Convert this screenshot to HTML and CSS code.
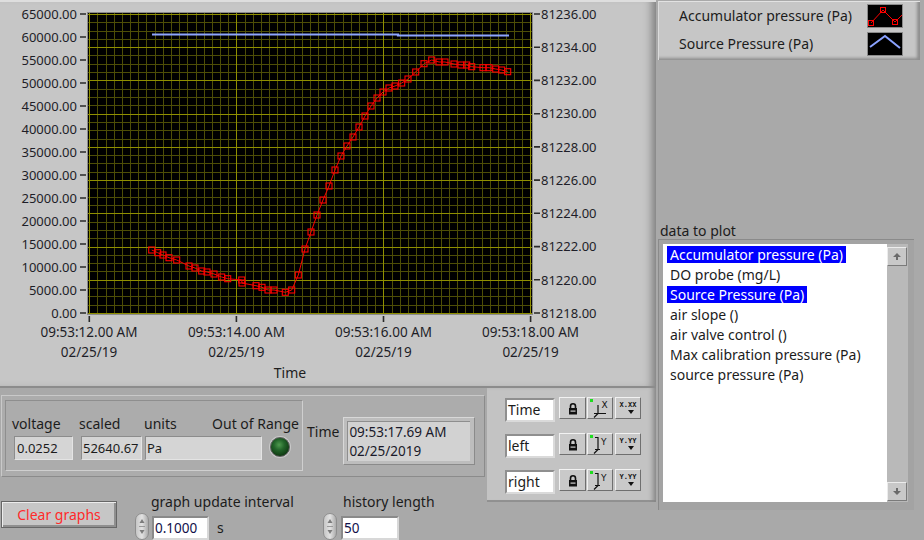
FILE: index.html
```html
<!DOCTYPE html>
<html>
<head>
<meta charset="utf-8">
<link rel="stylesheet" href="styles.css">
</head>
<body>
<div class="panel">
  <div class="left-col">
    <div class="graph-frame">
      <svg class="graph" width="656" height="386" viewBox="0 0 656 386">
        <defs>
          <marker id="sq" markerWidth="9" markerHeight="9" refX="4.5" refY="4.5" markerUnits="userSpaceOnUse">
            <rect x="1.5" y="1.5" width="6" height="6" class="sq-mark"/>
          </marker>
        </defs>
        <rect x="88" y="13" width="444" height="301" class="plot-bg"/>
        <path class="grid-minor" d="M97.5 13V314M106.5 13V314M114.5 13V314M122.5 13V314M130.5 13V314M138.5 13V314M146.5 13V314M155.5 13V314M163.5 13V314M171.5 13V314M179.5 13V314M187.5 13V314M196.5 13V314M204.5 13V314M212.5 13V314M220.5 13V314M228.5 13V314M245.5 13V314M253.5 13V314M261.5 13V314M269.5 13V314M277.5 13V314M285.5 13V314M294.5 13V314M302.5 13V314M310.5 13V314M318.5 13V314M326.5 13V314M334.5 13V314M343.5 13V314M351.5 13V314M359.5 13V314M367.5 13V314M375.5 13V314M392.5 13V314M400.5 13V314M408.5 13V314M416.5 13V314M424.5 13V314M433.5 13V314M441.5 13V314M449.5 13V314M457.5 13V314M465.5 13V314M473.5 13V314M482.5 13V314M490.5 13V314M498.5 13V314M506.5 13V314M514.5 13V314M522.5 13V314M88 22.5H532M88 31.5H532M88 39.5H532M88 55.5H532M88 64.5H532M88 72.5H532M88 89.5H532M88 97.5H532M88 105.5H532M88 122.5H532M88 130.5H532M88 139.5H532M88 155.5H532M88 163.5H532M88 172.5H532M88 188.5H532M88 197.5H532M88 205.5H532M88 222.5H532M88 230.5H532M88 238.5H532M88 255.5H532M88 263.5H532M88 271.5H532M88 288.5H532M88 296.5H532M88 305.5H532"/>
        <path class="grid-major" d="M89.5 13V314M236.5 13V314M383.5 13V314M530.5 13V314M88 14.5H532M88 47.5H532M88 80.5H532M88 114.5H532M88 147.5H532M88 180.5H532M88 213.5H532M88 247.5H532M88 280.5H532M88 313.5H532"/>
        <rect x="87.5" y="12.5" width="445" height="302" class="plot-border"/>
        <polyline class="src-line" points="152,34.5 398,34.5 398,35.5 509,35.5"/>
        <polyline class="acc-line" points="151.7,250 157.7,252.7 163,255 169,257.7 176.7,260 189,266 195,268 201.7,271 207,272 214,274 221.7,277 227.7,278.7 241.7,280 242,283 256,285.7 262,287.3 268,290 274,290 285.3,292.3 291.7,290 298.3,275 305,249 311,232 317,215 323,200 329,186 335,170 341,156 347,146 353,137 359,127 365,116 371,106 377,98 383,92 389,88 395,86 401.7,83 408,79 415.7,72 424,63.7 431.7,60 439,62 445,62 454,64 461,65 466.7,65 471.7,66.7 483,67.7 489,67.7 495.7,69 501.7,70 507.7,71.7"/>
        <path class="tick" d="M80 14H86M80 37H86M80 60H86M80 83H86M80 106H86M80 129H86M80 152H86M80 175H86M80 198H86M80 221H86M80 244H86M80 267H86M80 290H86M80 313H86M534 14H540M534 47.2H540M534 80.4H540M534 113.7H540M534 146.9H540M534 180.1H540M534 213.3H540M534 246.6H540M534 279.8H540M534 313H540M89.3 316V322M236.4 316V322M383.5 316V322M530.6 316V322"/>
        <g class="ylab">
          <text x="77" y="18.7">65000.00</text>
          <text x="77" y="41.7">60000.00</text>
          <text x="77" y="64.7">55000.00</text>
          <text x="77" y="87.7">50000.00</text>
          <text x="77" y="110.7">45000.00</text>
          <text x="77" y="133.7">40000.00</text>
          <text x="77" y="156.7">35000.00</text>
          <text x="77" y="179.7">30000.00</text>
          <text x="77" y="202.7">25000.00</text>
          <text x="77" y="225.7">20000.00</text>
          <text x="77" y="248.7">15000.00</text>
          <text x="77" y="271.7">10000.00</text>
          <text x="77" y="294.7">5000.00</text>
          <text x="77" y="317.7">0.00</text>
        </g>
        <g class="rlab">
          <text x="541" y="18.7">81236.00</text>
          <text x="541" y="51.9">81234.00</text>
          <text x="541" y="85.1">81232.00</text>
          <text x="541" y="118.4">81230.00</text>
          <text x="541" y="151.6">81228.00</text>
          <text x="541" y="184.8">81226.00</text>
          <text x="541" y="218">81224.00</text>
          <text x="541" y="251.3">81222.00</text>
          <text x="541" y="284.5">81220.00</text>
          <text x="541" y="317.7">81218.00</text>
        </g>
        <g class="xlab">
          <text x="89" y="337.3">09:53:12.00 AM</text>
          <text x="89" y="356.8">02/25/19</text>
          <text x="236.4" y="337.3">09:53:14.00 AM</text>
          <text x="236.4" y="356.8">02/25/19</text>
          <text x="383.5" y="337.3">09:53:16.00 AM</text>
          <text x="383.5" y="356.8">02/25/19</text>
          <text x="530.6" y="337.3">09:53:18.00 AM</text>
          <text x="530.6" y="356.8">02/25/19</text>
        </g>
        <text class="xtitle" x="290" y="378">Time</text>
      </svg>
    </div>
    <div class="bottom">
      <div class="bottom-left">
        <div class="cluster">
          <div class="group">
            <div class="lbl lbl-voltage">voltage</div>
            <div class="lbl lbl-scaled">scaled</div>
            <div class="lbl lbl-units">units</div>
            <div class="lbl lbl-range">Out of Range</div>
            <div class="field field-voltage">0.0252</div>
            <div class="field field-scaled">52640.67</div>
            <div class="field field-units">Pa</div>
            <div class="led"></div>
          </div>
          <div class="time-block">
            <div class="time-lbl">Time</div>
            <div class="time-display">
              <div class="time-inner">09:53:17.69 AM<br>02/25/2019</div>
            </div>
          </div>
        </div>
        <div class="controls">
          <button class="clear-btn">Clear graphs</button>
          <div class="numctl numctl-interval">
            <div class="numlbl">graph update interval</div>
            <div class="numrow">
              <svg class="spinner" width="14" height="27" viewBox="0 0 14 27">
                <defs><linearGradient id="spg" x1="0" x2="1" y1="0" y2="0"><stop offset="0" stop-color="#c4c4c4"/><stop offset="0.5" stop-color="#e2e2e2"/><stop offset="1" stop-color="#a8a8a8"/></linearGradient></defs>
                <rect x="0.5" y="0.5" width="13" height="26" rx="6.5" fill="url(#spg)" stroke="#8e8e8e"/>
                <path d="M4 13.5H10" stroke="#9a9a9a"/>
                <path d="M7 6L9.5 10H4.5Z M7 21L9.5 17H4.5Z" fill="#7c7c7c"/>
              </svg>
              <div class="numfield">0.1000</div>
              <span class="unit">s</span>
            </div>
          </div>
          <div class="numctl numctl-history">
            <div class="numlbl">history length</div>
            <div class="numrow">
              <svg class="spinner" width="14" height="27" viewBox="0 0 14 27">
                <rect x="0.5" y="0.5" width="13" height="26" rx="6.5" fill="url(#spg)" stroke="#8e8e8e"/>
                <path d="M4 13.5H10" stroke="#9a9a9a"/>
                <path d="M7 6L9.5 10H4.5Z M7 21L9.5 17H4.5Z" fill="#7c7c7c"/>
              </svg>
              <div class="numfield numfield-history">50</div>
            </div>
          </div>
        </div>
      </div>
      <div class="palette">
        <div class="prow">
          <div class="axis-name">Time</div>
          <div class="pbtn pbtn-lock"><svg width="10" height="13" viewBox="0 0 10 13"><path d="M2.5 6.5V4.2a2.5 2.5 0 0 1 5 0v2.3" fill="none" stroke="#111" stroke-width="1.6"/><rect x="1" y="6" width="8" height="6.5" fill="#111"/><rect x="2.5" y="8.5" width="5" height="1.2" fill="#cfcfcf"/></svg></div>
          <div class="pbtn pbtn-scale"><svg width="22" height="19" viewBox="0 0 22 19"><rect x="1" y="0" width="3" height="3" fill="#1fdc1f"/><path d="M9 6V14.5M5 14.5H17M9 14.5L5 18.5" stroke="#111" stroke-width="1.2" fill="none"/><text x="12.5" y="9" class="ico-letter">X</text></svg></div>
          <div class="pbtn pbtn-fmt"><svg width="22" height="18" viewBox="0 0 22 18"><text x="11" y="8" class="ico-fmt">X.XX</text><path d="M11 11H17L14 15Z" fill="#111"/></svg></div>
        </div>
        <div class="prow">
          <div class="axis-name">left</div>
          <div class="pbtn pbtn-lock"><svg width="10" height="13" viewBox="0 0 10 13"><path d="M2.5 6.5V4.2a2.5 2.5 0 0 1 5 0v2.3" fill="none" stroke="#111" stroke-width="1.6"/><rect x="1" y="6" width="8" height="6.5" fill="#111"/><rect x="2.5" y="8.5" width="5" height="1.2" fill="#cfcfcf"/></svg></div>
          <div class="pbtn pbtn-scale"><svg width="22" height="19" viewBox="0 0 22 19"><rect x="1" y="0" width="3" height="3" fill="#1fdc1f"/><path d="M9 2V14.5M6 2.5H9M6 14.5H11M9 14.5L5 18.5" stroke="#111" stroke-width="1.2" fill="none"/><text x="12" y="10" class="ico-letter">Y</text></svg></div>
          <div class="pbtn pbtn-fmt"><svg width="22" height="18" viewBox="0 0 22 18"><text x="11" y="8" class="ico-fmt">Y.YY</text><path d="M11 11H17L14 15Z" fill="#111"/></svg></div>
        </div>
        <div class="prow">
          <div class="axis-name">right</div>
          <div class="pbtn pbtn-lock"><svg width="10" height="13" viewBox="0 0 10 13"><path d="M2.5 6.5V4.2a2.5 2.5 0 0 1 5 0v2.3" fill="none" stroke="#111" stroke-width="1.6"/><rect x="1" y="6" width="8" height="6.5" fill="#111"/><rect x="2.5" y="8.5" width="5" height="1.2" fill="#cfcfcf"/></svg></div>
          <div class="pbtn pbtn-scale"><svg width="22" height="19" viewBox="0 0 22 19"><rect x="1" y="0" width="3" height="3" fill="#1fdc1f"/><path d="M9 2V14.5M6 2.5H9M6 14.5H11M9 14.5L5 18.5" stroke="#111" stroke-width="1.2" fill="none"/><text x="12" y="10" class="ico-letter">Y</text></svg></div>
          <div class="pbtn pbtn-fmt"><svg width="22" height="18" viewBox="0 0 22 18"><text x="11" y="8" class="ico-fmt">Y.YY</text><path d="M11 11H17L14 15Z" fill="#111"/></svg></div>
        </div>
      </div>
    </div>
  </div>
  <div class="right-col">
    <div class="legend">
      <div class="leg-row">
        <span>Accumulator pressure (Pa)</span>
        <svg class="leg-icon" width="34" height="22" viewBox="0 0 34 22">
          <rect width="34" height="22" fill="#000"/>
          <polyline points="3,18 15,5 27,17 34,10" fill="none" stroke="#ff0000" stroke-width="1"/>
          <rect x="0.5" y="15.5" width="5" height="5" fill="none" stroke="#ff0000"/>
          <rect x="12.5" y="2.5" width="5" height="5" fill="none" stroke="#ff0000"/>
          <rect x="24.5" y="14.5" width="5" height="5" fill="none" stroke="#ff0000"/>
        </svg>
      </div>
      <div class="leg-row">
        <span>Source Pressure (Pa)</span>
        <svg class="leg-icon" width="34" height="22" viewBox="0 0 34 22">
          <rect width="34" height="22" fill="#000"/>
          <polyline points="2,14 17,3 32,15" fill="none" stroke="#8aa2ff" stroke-width="2"/>
        </svg>
      </div>
    </div>
    <div class="data-lbl">data to plot</div>
    <div class="listframe">
      <ul class="list">
        <li class="sel"><span>Accumulator pressure (Pa)</span></li>
        <li><span>DO probe (mg/L)</span></li>
        <li class="sel"><span>Source Pressure (Pa)</span></li>
        <li><span>air slope ()</span></li>
        <li><span>air valve control ()</span></li>
        <li><span>Max calibration pressure (Pa)</span></li>
        <li><span>source pressure (Pa)</span></li>
      </ul>
      <div class="scrollbar">
        <div class="sbtn"><svg width="8" height="7" viewBox="0 0 8 7"><path d="M4 0L8 4H5V7H3V4H0Z" fill="#6a6a6a"/></svg></div>
        <div class="sbtn"><svg width="8" height="7" viewBox="0 0 8 7"><path d="M4 7L8 3H5V0H3V3H0Z" fill="#6a6a6a"/></svg></div>
      </div>
    </div>
  </div>
</div>
</body>
</html>
```

FILE: styles.css
```css
* { box-sizing: border-box; }
html, body { margin: 0; padding: 0; }
body {
  width: 924px;
  height: 540px;
  overflow: hidden;
  background: #a9a9a9;
  font-family: "Noto Sans", "DejaVu Sans", sans-serif;
  font-size: 14px;
  line-height: 16px;
  color: #1c1c1c;
}
.panel { display: flex; width: 924px; height: 540px; }
.left-col { width: 656px; flex: none; display: flex; flex-direction: column; }

/* graph */
.graph-frame {
  height: 388px;
  background: #c6c6c6;
  border-bottom: 2px solid #8c8c8c;
  box-shadow: inset 0 2px 0 #dedede, inset -9px 0 8px -5px #7e7e7e;
}
.graph { display: block; }
.plot-bg { fill: #000; }
.plot-border { fill: none; stroke: #8a8a8a; }
.grid-minor { fill: none; stroke: #4e4e06; stroke-width: 1; shape-rendering: crispEdges; }
.grid-major { fill: none; stroke: #8f8f00; stroke-width: 1; shape-rendering: crispEdges; }
.src-line { fill: none; stroke: #8ea6ff; stroke-width: 2.2; }
.acc-line { fill: none; stroke: #ff0000; stroke-width: 1; marker: url(#sq); }
.sq-mark { fill: none; stroke: #ff0000; stroke-width: 1.1; }
.tick { fill: none; stroke: #2a2a2a; stroke-width: 1.6; }
.ylab text, .rlab text { font-family: "Noto Sans", sans-serif; font-size: 13px; fill: #1e1e28; }
.ylab text { text-anchor: end; }
.xlab text { font-family: "Noto Sans", sans-serif; font-size: 13.5px; fill: #1e1e28; text-anchor: middle; }
.xtitle { font-family: "Noto Sans", sans-serif; font-size: 14px; fill: #1e1e1e; text-anchor: middle; }

/* bottom area */
.bottom { display: flex; flex: 1; }
.bottom-left { width: 487px; flex: none; }
.cluster {
  margin: 7px 0 0 1px;
  width: 484px;
  height: 82px;
  display: flex;
  align-items: flex-start;
  padding: 4px 0 0 3px;
  background: #acacac;
  border: 1px solid;
  border-color: #c9c9c9 #8b8b8b #8b8b8b #c9c9c9;
}
.group {
  width: 298px;
  height: 71px;
  border: 1px solid;
  border-color: #8e8e8e #cfcfcf #cfcfcf #8e8e8e;
  padding: 15px 3px 0 6px;
  display: grid;
  grid-template-columns: 68px 64px 120px 1fr;
  grid-template-rows: 16px 24px;
  row-gap: 4px;
}
.lbl { white-space: nowrap; }
.lbl-voltage { grid-column: 1; grid-row: 1; }
.lbl-scaled { grid-column: 2; grid-row: 1; margin-left: -1px; }
.lbl-units { grid-column: 3; grid-row: 1; }
.lbl-range { grid-column: 3 / 5; grid-row: 1; text-align: right; }
.field {
  grid-row: 2;
  height: 24px;
  background: #d5d5d5;
  border: 1px solid;
  border-color: #8c8c8c #e4e4e4 #e4e4e4 #8c8c8c;
  padding: 0 2px;
  font-size: 13px;
  line-height: 22px;
  white-space: nowrap;
  overflow: hidden;
}
.field-voltage { grid-column: 1; margin-left: 2px; width: 59px; }
.field-scaled { grid-column: 2; margin-left: 1px; width: 61px; padding: 0 1px; }
.field-units { grid-column: 3; margin-left: 1px; width: 117px; padding: 0 1px; }
.led {
  grid-column: 4;
  grid-row: 2;
  width: 20px;
  height: 20px;
  margin: 1px 0 0 6px;
  border-radius: 50%;
  background: radial-gradient(circle at 45% 38%, #4f9a4f 0, #23652a 35%, #0f3a12 75%, #0a260b 100%);
  border: 1px solid #5e5e5e;
  box-shadow: 0 0 0 1px #c9c9c9;
}
.time-block { display: flex; align-items: flex-start; margin-left: 4px; }
.time-lbl { margin-top: 24px; }
.time-display {
  width: 132px;
  height: 48px;
  margin: 17px 0 0 4px;
  padding: 3px 4px 3px 3px;
  background: #bdbdbd;
  border: 1px solid;
  border-color: #d8d8d8 #8a8a8a #8a8a8a #d8d8d8;
}
.time-inner {
  height: 100%;
  background: #d2d2d2;
  border-top: 1px solid #8e8e8e;
  border-left: 1px solid #8e8e8e;
  padding: 1px 0 0 1px;
  font-size: 13.5px;
  line-height: 19px;
  color: #1a1a2a;
}

.controls { display: flex; align-items: flex-start; margin-top: 17px; }
.clear-btn {
  margin: 7px 0 0 1px;
  width: 116px;
  height: 27px;
  padding: 0;
  font-family: inherit;
  font-size: 14px;
  color: #ff2a2a;
  background: #c6c6c6;
  border: 1px solid #666;
  box-shadow: inset 1px 1px 0 #ececec, inset -2px -2px 0 #8f8f8f;
}
.numctl-interval { margin-left: 18px; width: 188px; }
.numlbl { white-space: nowrap; }
.numctl-interval .numlbl { padding-left: 16px; }
.numctl-history .numlbl { padding-left: 20px; }
.numrow { display: flex; align-items: flex-start; margin-top: 3px; }
.spinner { display: block; flex: none; }
.numfield {
  margin: 3px 0 0 3px;
  width: 57px;
  height: 24px;
  background: #fff;
  border: 2px solid;
  border-color: #8a8a8a #d8d8d8 #d8d8d8 #8a8a8a;
  padding-left: 1px;
  font-size: 13.5px;
  line-height: 20px;
  color: #10104a;
}
.numfield-history { margin-left: 4px; width: 58px; }
.unit { margin: 3px 0 0 8px; line-height: 24px; }

/* axis palette */
.palette {
  width: 169px;
  height: 114px;
  flex: none;
  background: #c3c3c3;
  padding: 9px 0 0 18px;
  box-shadow: inset -6px 0 5px -3px #868686, inset 0 -2px 0 #929292;
  display: flex;
  flex-direction: column;
  gap: 12px;
}
.prow { display: flex; align-items: flex-start; height: 24px; }
.axis-name {
  width: 50px;
  height: 24px;
  margin-top: 1px;
  background: #fff;
  border: 2px solid;
  border-color: #8f8f8f #dadada #dadada #8f8f8f;
  padding-left: 1px;
  line-height: 20px;
}
.pbtn {
  height: 22px;
  display: flex;
  align-items: center;
  justify-content: center;
  background: #c9c9c9;
  border: 1px solid;
  border-color: #f2f2f2 #6f6f6f #6f6f6f #f2f2f2;
}
.pbtn svg { display: block; }
.pbtn-lock { width: 27px; margin-left: 4px; }
.pbtn-scale { width: 26px; margin-left: 1px; }
.pbtn-fmt { width: 26px; margin-left: 2px; }
.ico-letter { font-family: "DejaVu Sans", sans-serif; font-size: 9px; fill: #111; }
.ico-fmt { font-family: "DejaVu Sans Mono", monospace; font-size: 7px; font-weight: bold; fill: #111; text-anchor: middle; }

/* right column */
.right-col { flex: 1; display: flex; flex-direction: column; }
.legend {
  margin: 1px 0 0 2px;
  width: 262px;
  height: 59px;
  background: #c6c6c6;
  border-top: 1px solid #e2e2e2;
  border-left: 1px solid #dcdcdc;
  box-shadow: inset -4px -3px 3px -1px #8e8e8e;
  padding: 3px 18px 0 20px;
  display: flex;
  flex-direction: column;
  gap: 6px;
}
.leg-row { display: flex; justify-content: space-between; align-items: center; height: 22px; }
.leg-icon { display: block; outline: 1px solid #8a8a8a; }
.data-lbl { margin: 163px 0 0 4px; }
.listframe {
  margin-left: 2px;
  width: 256px;
  height: 271px;
  padding: 4px 6px 8px 4px;
  background: #a3a3a3;
  border-top: 1px solid #8a8a8a;
  border-left: 1px solid #8a8a8a;
  display: flex;
}
.list {
  flex: 1;
  margin: 0;
  padding: 2px 0 0 4px;
  list-style: none;
  background: #fff;
}
.list li { height: 20px; white-space: nowrap; }
.list span { display: inline-block; padding: 0 3px; line-height: 17px; }
.list .sel span { background: #0000ff; color: #fff; }
.scrollbar {
  width: 21px;
  flex: none;
  background: #b9b9b9;
  display: flex;
  flex-direction: column;
  justify-content: space-between;
  padding: 3px 1px 1px 0;
}
.sbtn {
  width: 20px;
  height: 19px;
  display: flex;
  align-items: center;
  justify-content: center;
  background: #c8c8c8;
  border: 1px solid;
  border-color: #ececec #7a7a7a #7a7a7a #ececec;
}
.sbtn svg { display: block; }
```
